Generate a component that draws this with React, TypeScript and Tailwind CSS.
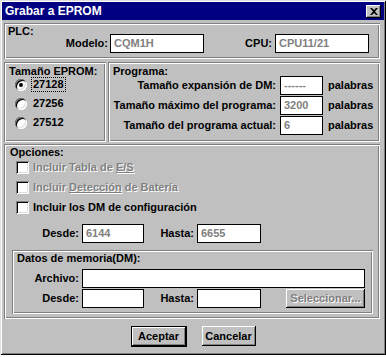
import type { ReactNode } from "react";

const groove =
  "shadow-[inset_1px_1px_0_#808080,inset_-1px_-1px_0_#fff,inset_2px_2px_0_#fff,inset_-2px_-2px_0_#808080]";
const raised =
  "bg-[#c0c0c0] shadow-[inset_-1px_-1px_0_#000,inset_1px_1px_0_#fff,inset_-2px_-2px_0_#808080]";
const sunken =
  "bg-white shadow-[inset_1px_1px_0_#808080,inset_-1px_-1px_0_#fff,inset_2px_2px_0_#000,inset_-2px_-2px_0_#dfdfdf]";
const disabled = "text-[#808080] [text-shadow:1px_1px_0_#fff]";

function Field({ value, className }: { value?: string; className: string }) {
  return (
    <div className={`h-[19px] border border-black bg-white pl-[3px] leading-[17px] text-[#808080] ${className}`}>
      {value}
    </div>
  );
}

function Label({ children, className }: { children: ReactNode; className: string }) {
  return <div className={`shrink-0 text-right ${className}`}>{children}</div>;
}

function Radio({ checked, children }: { checked?: boolean; children: ReactNode }) {
  return (
    <div className="flex h-[19px] items-center pl-[9px]">
      <div className={`flex h-[12px] w-[12px] items-center justify-center rounded-full ${sunken}`}>
        {checked && <div className="h-[4px] w-[4px] rounded-full bg-black" />}
      </div>
      <div className={`ml-[4px] px-[1px] leading-[13px] ${checked ? "border border-dotted border-black" : "border border-transparent"}`}>
        {children}
      </div>
    </div>
  );
}

function Check({ off, children }: { off?: boolean; children: ReactNode }) {
  return (
    <div className="flex h-[20px] items-center pl-[10px]">
      <div className={`h-[13px] w-[13px] ${sunken}`} />
      <div className={`ml-[4px] ${off ? disabled : ""}`}>{children}</div>
    </div>
  );
}

function ProgRow({ label, value }: { label: string; value: string }) {
  return (
    <div className="flex h-[20px] items-center">
      <Label className="w-[166px]">{label}</Label>
      <Field value={value} className="ml-[4px] w-[43px]" />
      <div className="ml-[5px]">palabras</div>
    </div>
  );
}

export default function App() {
  return (
    <div className="h-[357px] w-[386px] bg-white font-['Liberation_Sans',Arial,sans-serif] text-[11px] font-bold text-black">
      <div className="flex h-[355px] w-[386px] flex-col bg-[#c0c0c0] p-[2px] shadow-[inset_1px_1px_0_#dfdfdf,inset_-1px_-1px_0_#000,inset_2px_2px_0_#fff,inset_-2px_-2px_0_#808080]">
        {/* title bar */}
        <div className="flex h-[18px] items-center bg-[#000080] pl-[3px] pr-[3px] text-[12px] text-white">
          <span>Grabar a EPROM</span>
          <div className={`ml-auto flex h-[13px] w-[15px] items-center justify-center ${raised}`}>
            <svg width="8" height="7" viewBox="0 0 8 7">
              <path d="M0 0h2l2 2 2-2h2L5 3.5 8 7H6L4 5 2 7H0l3-3.5z" fill="#000" />
            </svg>
          </div>
        </div>

        <div className="flex flex-col pl-[2px] pr-[2px]">
          {/* PLC */}
          <div className={`mt-[3px] flex h-[36px] w-[376px] flex-col p-[2px] ${groove}`}>
            <div className="h-[8px] pl-[2px] leading-[12px]">PLC:</div>
            <div className="mt-[1px] flex items-center">
              <Label className="w-[102px]">Modelo:</Label>
              <Field value="CQM1H" className="ml-[2px] w-[94px]" />
              <Label className="w-[68px]">CPU:</Label>
              <Field value="CPU11/21" className="ml-[3px] w-[94px]" />
            </div>
          </div>

          {/* EPROM + Programa */}
          <div className="mt-[3px] flex h-[80px] w-[376px] gap-[2px]">
            <div className={`flex w-[102px] flex-col p-[2px] ${groove}`}>
              <div className="mt-[1px] h-[10px] pl-[3px] leading-[12px]">Tamaño EPROM:</div>
              <Radio checked>27128</Radio>
              <Radio>27256</Radio>
              <Radio>27512</Radio>
            </div>
            <div className={`flex flex-1 flex-col p-[2px] ${groove}`}>
              <div className="mt-[1px] h-[10px] pl-[3px] leading-[12px]">Programa:</div>
              <ProgRow label="Tamaño expansión de DM:" value="------" />
              <ProgRow label="Tamaño máximo del programa:" value="3200" />
              <ProgRow label="Tamaño del programa actual:" value="6" />
            </div>
          </div>

          {/* Opciones */}
          <div className={`mt-[2px] flex h-[175px] w-[376px] flex-col p-[2px] ${groove}`}>
            <div className="h-[11px] pl-[4px] leading-[12px]">Opciones:</div>
            <Check off>
              Incluir Tabla de <span className="underline">E/S</span>
            </Check>
            <Check off>
              Incluir <span className="underline">Detección</span> de Batería
            </Check>
            <Check>Incluir los DM de configuración</Check>
            <div className="mt-[7px] flex items-center">
              <Label className="w-[73px]">Desde:</Label>
              <Field value="6144" className="ml-[3px] w-[62px]" />
              <Label className="w-[50px]">Hasta:</Label>
              <Field value="6655" className="ml-[3px] w-[64px]" />
            </div>

            <div className={`ml-[6px] mt-[7px] flex h-[64px] w-[361px] flex-col p-[2px] ${groove}`}>
              <div className="h-[17px] pl-[3px] leading-[12px]">Datos de memoria(DM):</div>
              <div className="flex h-[19px] items-center">
                <Label className="w-[65px]">Archivo:</Label>
                <Field className="ml-[3px] w-[283px]" />
              </div>
              <div className="mt-[1px] flex h-[19px] items-center">
                <Label className="w-[65px]">Desde:</Label>
                <Field className="ml-[3px] w-[62px]" />
                <Label className="w-[50px]">Hasta:</Label>
                <Field className="ml-[3px] w-[64px]" />
                <div className={`ml-[25px] flex h-[19px] w-[79px] items-center justify-center ${raised} ${disabled}`}>
                  Seleccionar...
                </div>
              </div>
            </div>
          </div>

          {/* buttons */}
          <div className="mt-[7px] flex justify-center gap-[15px]">
            <div className="border border-black">
              <div className={`flex h-[19px] w-[54px] items-center justify-center ${raised}`}>Aceptar</div>
            </div>
            <div className={`flex h-[20px] w-[54px] items-center justify-center ${raised}`}>Cancelar</div>
          </div>
        </div>
      </div>
    </div>
  );
}
